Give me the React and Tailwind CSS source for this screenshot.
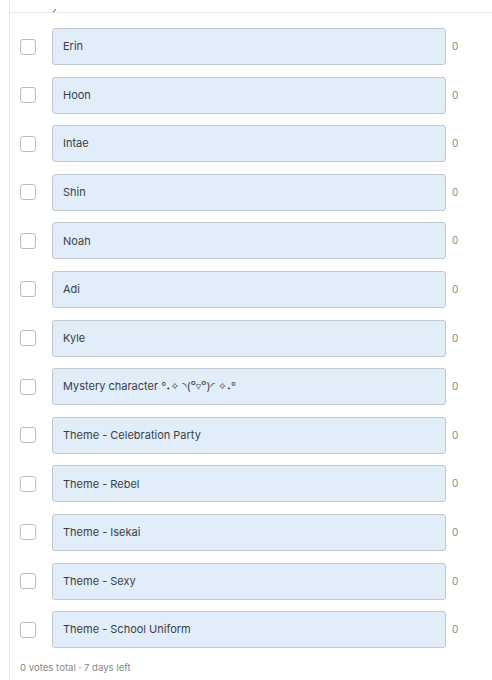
import React from "react";

const options = [
  "Erin",
  "Hoon",
  "Intae",
  "Shin",
  "Noah",
  "Adi",
  "Kyle",
  "Mystery character °˖✧ ◝(⁰▿⁰)◜ ✧˖°",
  "Theme - Celebration Party",
  "Theme - Rebel",
  "Theme - Isekai",
  "Theme - Sexy",
  "Theme - School Uniform",
];

const OptionRow = ({ label, votes = 0 }) => (
  <div className="flex items-center h-[37px]">
    <div className="ml-[10px] w-4 h-4 rounded-[3px] border border-[#bdbdbd] bg-white flex-shrink-0"></div>
    <div className="ml-[16px] w-[394px] h-[37px] rounded-[3px] border border-[#c2c7cc] bg-[#e1edf9] flex items-center px-[10px] text-[11px] text-[#3a3f44]">
      {label}
    </div>
    <span className="ml-[6px] text-[10px] text-[#888]">{votes}</span>
  </div>
);

export default function App() {
  return (
    <div
      className="w-[492px] h-[680px] overflow-hidden bg-white"
      style={{ fontFamily: "Inter, 'Noto Sans', 'DejaVu Sans', sans-serif" }}
    >
      <div className="ml-[9px] h-full border-l border-[#e8e8e8]">
        {/* question text is scrolled out; only a descender peeks in */}
        <div className="h-[12px] pt-[9px]">
          <div className="h-[3px] overflow-hidden">
            <div className="mt-[-8px] pl-[42px] text-[11px] leading-[11px] text-[#666]">y</div>
          </div>
        </div>
        <div className="border-t border-[#e8e8e8]"></div>
        <div className="pt-[15px] flex flex-col gap-[11.6px]">
          {options.map((label) => (
            <OptionRow key={label} label={label} />
          ))}
        </div>
        <div className="mt-[13px] pl-[10px] text-[9.6px] text-[#888]">
          0 votes total · 7 days left
        </div>
      </div>
    </div>
  );
}
